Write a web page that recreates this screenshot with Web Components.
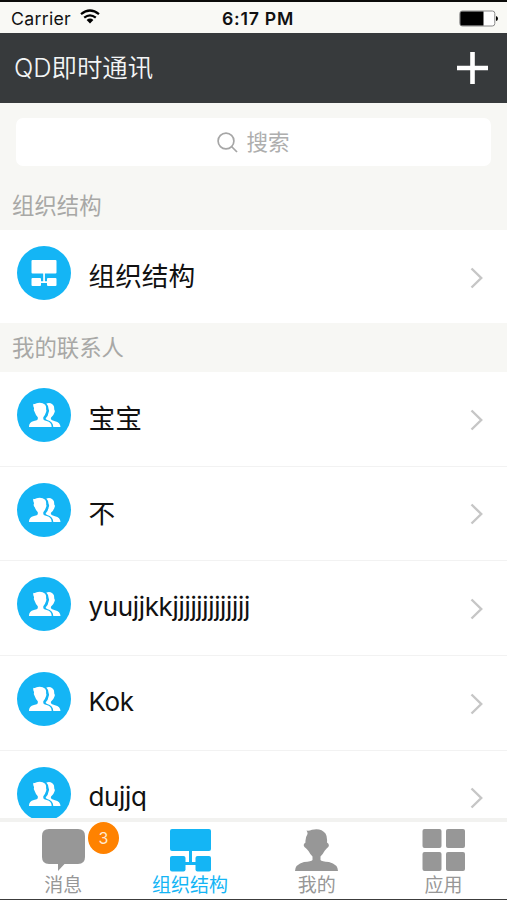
<!DOCTYPE html>
<html lang="zh-CN">
<head>
<meta charset="UTF-8">
<title>QD即时通讯</title>
<style>
    body {
        margin: 0;
        background: #fff;
        font-family: Inter, "Noto Sans CJK SC", sans-serif;
    }
</style>
</head>
<body>
<im-app></im-app>

<script>
class StatusBar extends HTMLElement {
    constructor() {
        super();
        this.attachShadow({ mode: 'open' });
        this.shadowRoot.innerHTML = `
            <style>
                :host {
                    display: grid;
                    grid-template-columns: 1fr auto 1fr;
                    align-items: center;
                    box-sizing: border-box;
                    height: 33px;
                    padding: 1px 9px 0 11px;
                    border-top: 2px solid #0c0c0a;
                    background: #f9f9f5;
                    color: #111;
                    font-size: 17.7px;
                    line-height: 29px;
                    flex: none;
                }
                .left {
                    display: flex;
                    align-items: center;
                    gap: 9px;
                }
                .carrier {
                    letter-spacing: .3px;
                }
                .time {
                    font-weight: 600;
                    letter-spacing: .75px;
                    padding-left: 7px;
                }
                .battery {
                    justify-self: end;
                }
                svg {
                    display: block;
                }
                .wifi {
                    margin-top: -3px;
                }
            </style>
            <div class="left">
                <span class="carrier"></span>
                <svg class="wifi" width="20" height="15" viewBox="0 0 20 15">
                    <g fill="none" stroke="#000" stroke-width="2.2">
                        <path d="M1 5.2Q10-2.2 19 5.2"/>
                        <path d="M4.2 8.7Q10 3.9 15.8 8.7"/>
                    </g>
                    <path d="M6.6 11Q10 8.2 13.4 11L10 14.6z"/>
                </svg>
            </div>
            <span class="time"></span>
            <svg class="battery" width="39" height="17" viewBox="0 0 39 17">
                <rect x=".8" y="1" width="35" height="15" rx="2.5" fill="#fff" stroke="#888"/>
                <path d="M3 1.5H24.5V15.5H3Q1.3 15.5 1.3 14V3Q1.3 1.5 3 1.5z"/>
                <path d="M37 6Q39 6.5 39 8.5Q39 10.500 37 11z"/>
            </svg>
        `;
    }

    connectedCallback() {
        this.shadowRoot.querySelector('.carrier').textContent = this.getAttribute('carrier') || 'Carrier';
        this.shadowRoot.querySelector('.time').textContent = this.getAttribute('time') || '';
    }
}

class NavBar extends HTMLElement {
    constructor() {
        super();
        this.attachShadow({ mode: 'open' });
        this.shadowRoot.innerHTML = `
            <style>
                :host {
                    display: flex;
                    align-items: center;
                    justify-content: space-between;
                    flex: none;
                    box-sizing: border-box;
                    height: 69.500px;
                    padding: 0 19px 0 14px;
                    background: #373a3c;
                    color: #f3f5f6;
                    font-size: 25.4px;
                    font-weight: 350;
                }
                .title {
                    margin-top: -3px;
                }
            </style>
            <span class="title"><slot></slot></span>
            <svg width="31" height="32" viewBox="0 0 31 32">
                <path d="M0 16H31M15.500 0V32" stroke="#fff" stroke-width="4.600"/>
            </svg>
        `;
    }
}

class SearchBox extends HTMLElement {
    constructor() {
        super();
        this.attachShadow({ mode: 'open' });
        this.shadowRoot.innerHTML = `
            <style>
                :host {
                    display: flex;
                    align-items: center;
                    justify-content: center;
                    gap: 8px;
                    flex: none;
                    height: 48px;
                    margin: 15.500px 16px 14.500px;
                    border-radius: 7px;
                    background: #fff;
                    color: #aeaeae;
                    font-size: 21.5px;
                    line-height: 48px;
                }
            </style>
            <svg width="21" height="21" viewBox="0 0 21 21" fill="none" stroke="#a6a6a6" stroke-width="1.700">
                <circle cx="9" cy="9" r="7.900"/>
                <path d="M14.500 14.500L20 20"/>
            </svg>
            <slot></slot>
        `;
    }
}

class SectionTitle extends HTMLElement {
    constructor() {
        super();
        this.attachShadow({ mode: 'open' });
        this.shadowRoot.innerHTML = `
            <style>
                :host {
                    display: block;
                    flex: none;
                    height: 49.500px;
                    padding-left: 12px;
                    color: #a8a8a6;
                    font-size: 22.4px;
                    line-height: 50px;
                }
            </style>
            <slot></slot>
        `;
    }
}

const AVATARS = {
    org: `
        <rect x="14.500" y="14" width="25" height="13.500" rx="1"/>
        <rect x="14.500" y="32" width="9.500" height="8" rx="1"/>
        <rect x="30" y="32" width="9.500" height="8" rx="1"/>
        <path d="M26.200 27H27.900V35.200H31V36.900H23V35.200H26.200z"/>`,
    people: `
        <path d="M16.300 15.800Q17.700 16.300 18.800 15.400Q24.500 13.400 28.200 16.800Q29.500 18.300 29.100 21.600Q29.900 22.700 28.900 24.600Q28 27.600 26.300 29.200V31.200Q26.600 32.300 29.700 32.900Q34.500 34 34.700 38.900H11.900Q12 34 16.900 32.900Q20.600 32.300 20.800 31.200V29.200Q18.800 27.500 17.900 24.500Q15.900 22.500 17.100 20.300Q15.800 18 16.300 15.800z"/>
        <path d="M29.300 15.400Q34.900 13.700 37 18.500L37.300 21.700Q38.500 22.700 37.400 24.700Q36.600 27.600 33.900 29.700V31.200Q34.500 32.300 38 33.200Q43.300 34.500 43.500 38.900H36.300Q36 33.500 30.200 32Q28.500 31.500 28.700 30.300Q31.300 27.500 31.500 24.700Q32.700 22.500 31.600 21Q31.500 17.500 29.300 15.400z"/>`
};

class ContactRow extends HTMLElement {
    constructor() {
        super();
        this.attachShadow({ mode: 'open' });
        this.shadowRoot.innerHTML = `
            <style>
                :host {
                    display: flex;
                    align-items: flex-start;
                    flex: none;
                    box-sizing: border-box;
                    height: 94.700px;
                    padding: 16px 24px 0 17px;
                    border-bottom: 1.500px solid #f2f2f2;
                    background: #fff;
                    color: #111;
                    font-size: 26.700px;
                }
                :host([last]) {
                    height: 92.500px;
                    border-bottom: none;
                }
                .avatar {
                    flex: none;
                    width: 54px;
                    height: 54px;
                    border-radius: 50%;
                    background: #14b5f5;
                    fill: #fff;
                }
                .name {
                    flex: 1;
                    margin-left: 17.500px;
                    line-height: 60px;
                }
                .name.latin {
                    font-size: 26px;
                    letter-spacing: -.35px;
                }
                .arrow {
                    margin-top: 20.500px;
                }
            </style>
            <svg class="avatar" viewBox="0 0 54 54"></svg>
            <span class="name"><slot></slot></span>
            <svg class="arrow" width="13" height="22" viewBox="0 0 13 22">
                <path d="M1.500 1.500L11.200 11L1.500 20.500" fill="none" stroke="#c6c6c6" stroke-width="2.400"/>
            </svg>
        `;
    }

    connectedCallback() {
        this.shadowRoot.querySelector('.avatar').innerHTML = AVATARS[this.getAttribute('avatar')] || AVATARS.people;
        this.shadowRoot.querySelector('.name').classList.toggle('latin', this.hasAttribute('latin'));
    }
}

const TAB_ICONS = {
    chat: `<path d="M7 0H36Q43 0 43 7V28Q43 35 36 35H22.500L16 42V35H7Q0 35 0 28V7Q0 0 7 0z"/>`,
    org: `
        <rect x="1" width="41" height="22" rx="2"/>
        <rect x="1" y="27" width="15.500" height="15.500" rx="2"/>
        <rect x="26.500" y="27" width="15.500" height="15.500" rx="2"/>
        <path d="M20 21H23V33H27V36H16V33H20z"/>`,
    me: `<path d="M11.500 1.500Q14 2 17 .8Q26-1.200 30.500 4.500Q32.500 7.500 32 13.500Q35 15.500 33.200 18Q31 20 29.500 22Q28 25 25.500 27.500V31Q26.500 32.500 34 33Q43 35.500 43 42H0Q0 35.500 9 33Q16.500 32.500 17.500 31V27.500Q15 25 13.500 22Q11.500 19.500 9.500 18Q7.500 15.500 10.500 13.500Q10 9 12.500 5Q12.800 3.500 11.500 1.500z"/>`,
    apps: `
        <rect x=".5" width="19" height="19" rx="2"/>
        <rect x="24" width="19" height="19" rx="2"/>
        <rect x=".5" y="23" width="19" height="19" rx="2"/>
        <rect x="24" y="23" width="19" height="19" rx="2"/>`
};

class TabItem extends HTMLElement {
    constructor() {
        super();
        this.attachShadow({ mode: 'open' });
        this.shadowRoot.innerHTML = `
            <style>
                :host {
                    position: relative;
                    display: flex;
                    flex-direction: column;
                    align-items: center;
                    flex: 1;
                    padding-top: 7px;
                    color: #979797;
                    font-size: 19px;
                    line-height: 28px;
                }
                :host([active]) {
                    color: #14b5f5;
                }
                .icon {
                    display: block;
                    flex: none;
                    fill: currentColor;
                }
                .badge {
                    position: absolute;
                    top: 0;
                    left: 88px;
                    width: 31px;
                    height: 32px;
                    border-radius: 50%;
                    background: #ff8200;
                    color: #ffe9cf;
                    font-size: 16px;
                    line-height: 32px;
                    text-align: center;
                }
                .badge:empty {
                    display: none;
                }
            </style>
            <svg class="icon" width="43" height="43" viewBox="0 0 43 43"></svg>
            <slot></slot>
            <span class="badge"></span>
        `;
    }

    connectedCallback() {
        this.shadowRoot.querySelector('.icon').innerHTML = TAB_ICONS[this.getAttribute('icon')] || '';
        this.shadowRoot.querySelector('.badge').textContent = this.getAttribute('badge') || '';
    }
}

class TabBar extends HTMLElement {
    constructor() {
        super();
        this.attachShadow({ mode: 'open' });
        this.shadowRoot.innerHTML = `
            <style>
                :host {
                    display: flex;
                    flex: none;
                    box-sizing: border-box;
                    height: 82px;
                    border-top: 4px solid #f2f2f0;
                    border-bottom: 1px solid #3c3c3c;
                    background: #fff;
                }
            </style>
            <slot></slot>
        `;
    }
}

class ImApp extends HTMLElement {
    constructor() {
        super();
        this.attachShadow({ mode: 'open' });
        this.shadowRoot.innerHTML = `
            <style>
                :host {
                    display: flex;
                    flex-direction: column;
                    height: 900px;
                    overflow: hidden;
                    background: #f7f7f4;
                }
                main {
                    display: flex;
                    flex-direction: column;
                    flex: 1;
                    min-height: 0;
                    overflow: hidden;
                }
            </style>
            <status-bar carrier="Carrier" time="6:17 PM"></status-bar>
            <nav-bar>QD即时通讯</nav-bar>
            <main>
                <search-box>搜索</search-box>
                <section-title>组织结构</section-title>
                <contact-row avatar="org" last>组织结构</contact-row>
                <section-title>我的联系人</section-title>
                <contact-row>宝宝</contact-row>
                <contact-row>不</contact-row>
                <contact-row latin>yuujjkkjjjjjjjjjjjjj</contact-row>
                <contact-row latin>Kok</contact-row>
                <contact-row latin>dujjq</contact-row>
            </main>
            <tab-bar>
                <tab-item icon="chat" badge="3">消息</tab-item>
                <tab-item icon="org" active>组织结构</tab-item>
                <tab-item icon="me">我的</tab-item>
                <tab-item icon="apps">应用</tab-item>
            </tab-bar>
        `;
    }
}

customElements.define('status-bar', StatusBar);
customElements.define('nav-bar', NavBar);
customElements.define('search-box', SearchBox);
customElements.define('section-title', SectionTitle);
customElements.define('contact-row', ContactRow);
customElements.define('tab-item', TabItem);
customElements.define('tab-bar', TabBar);
customElements.define('im-app', ImApp);
</script>
</body>
</html>
